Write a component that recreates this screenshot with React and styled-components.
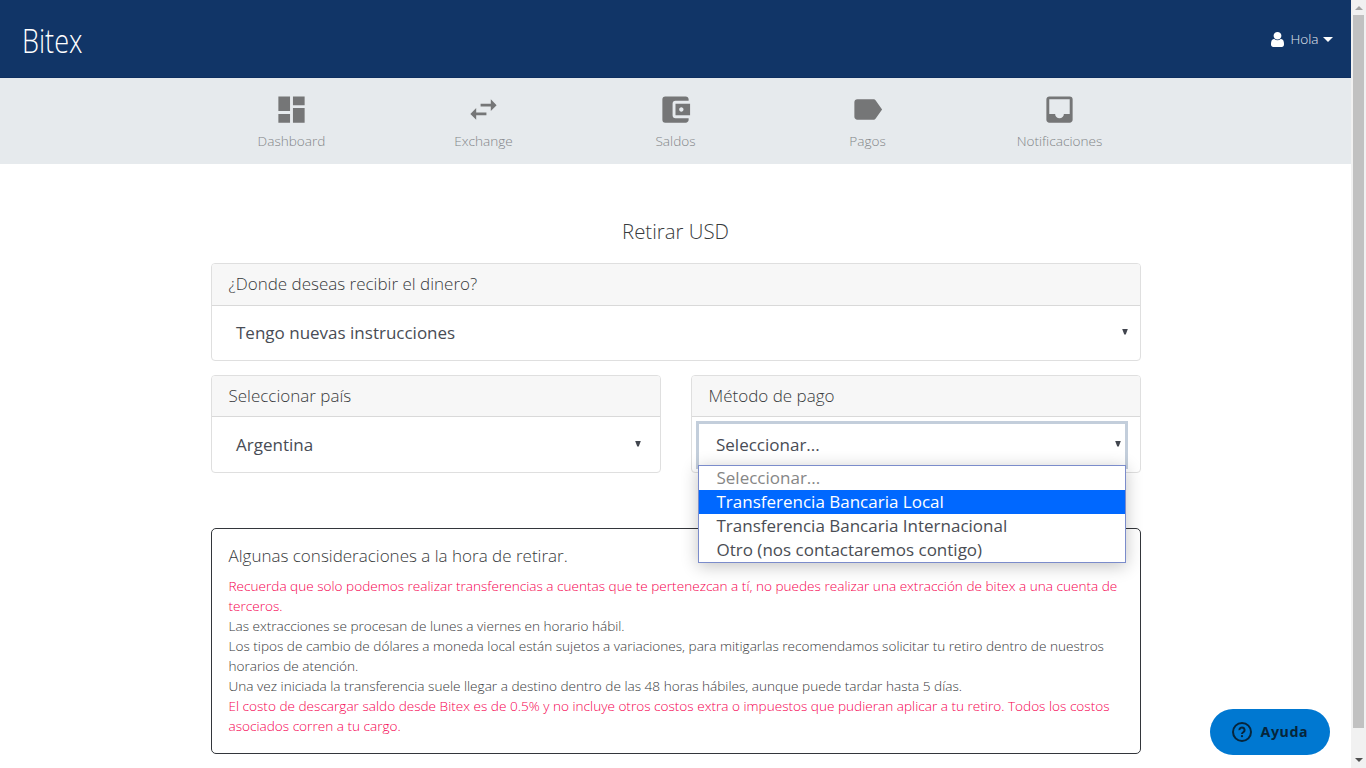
import React from 'react';
import styled, { createGlobalStyle } from 'styled-components';
import {
  MdDashboard,
  MdSwapHoriz,
  MdAccountBalanceWallet,
  MdLabel,
  MdInbox,
} from 'react-icons/md';

const GlobalStyle = createGlobalStyle`
  *, *::before, *::after { box-sizing: border-box; }
  html, body { margin: 0; padding: 0; }
  body {
    overflow: hidden;
    background: #fff;
    color: #373a3c;
    font-family: 'Open Sans', 'Noto Sans', sans-serif;
    font-weight: 300;
    font-size: 17px;
  }
`;

const Shell = styled.div`
  display: flex;
  width: 100%;
  height: 768px;
  overflow: hidden;
`;

const Page = styled.div`
  flex: 1;
  min-width: 0;
`;

const TopBar = styled.header`
  display: flex;
  align-items: center;
  justify-content: space-between;
  height: 78px;
  padding: 0 18px 0 22px;
  background: #113567;
  border-bottom: 1px solid #0e2f60;
`;

const Logo = styled.span`
  padding-top: 5px;
  color: #fff;
  font-size: 33px;
  line-height: 44px;
  transform: scaleX(0.82);
  transform-origin: left center;
`;

const UserMenu = styled.div`
  display: flex;
  align-items: center;
  color: #e4e9f0;
  font-size: 13.6px;
  line-height: 20px;
`;

const UserIcon = styled.svg`
  width: 13px;
  height: 15px;
  margin: 2px 6px 0 0;
  fill: #fff;
`;

const Caret = styled.span`
  margin: 2px 0 0 4.5px;
  border-top: 5px solid #fff;
  border-left: 5px solid transparent;
  border-right: 5px solid transparent;
`;

const NavBar = styled.nav`
  display: flex;
  justify-content: center;
  height: 86px;
  background: #e6eaed;
`;

const NavList = styled.div`
  display: grid;
  grid-template-columns: repeat(5, 192px);
`;

const NavItem = styled.a`
  display: flex;
  flex-direction: column;
  align-items: center;
  padding-top: 14px;
  color: #838689;
  font-size: 13.6px;
  line-height: 20px;

  svg {
    margin-bottom: 4px;
    color: #757677;
  }
`;

const Main = styled.main`
  width: 930px;
  margin: 0 auto;
  padding-top: 53px;
`;

const Title = styled.h1`
  margin: 0 0 17px;
  font-size: 20.4px;
  font-weight: 300;
  line-height: 29px;
  text-align: center;
`;

const Card = styled.section`
  height: 98px;
  border: 1px solid #dfdfdf;
  border-radius: 4px;
  background: #fff;
`;

const CardHeader = styled.div`
  height: ${(p) => p.$height || 41}px;
  padding: 0 17px;
  border-bottom: 1px solid #d9d9d9;
  border-radius: 3px 3px 0 0;
  background: #f7f7f7;
  font-size: 17px;
  line-height: 39px;
`;

const Columns = styled.div`
  display: grid;
  grid-template-columns: 1fr 1fr;
  gap: 30px;
  margin-top: 14px;
`;

const SelectBox = styled.div`
  display: flex;
  align-items: center;
  justify-content: space-between;
  position: relative;
  height: ${(p) => (p.$open ? 48 : 46)}px;
  margin: ${(p) => p.$top || 5}px ${(p) => (p.$open ? 11.5 : 4)}px 0 4px;
  padding: 0 ${(p) => p.$end || 7}px 0 20.5px;
  border: ${(p) => (p.$open ? '3px solid #c3cedb' : '0 solid transparent')};
  ${(p) => p.$open && 'padding-left: 17.5px; padding-right: 4px;'}
  color: #484c55;
  font-weight: 400;
  line-height: 24px;
`;

const Arrow = styled.span`
  width: 6px;
  height: 6px;
  margin-top: -3px;
  background: #42464f;
  clip-path: polygon(0 0, 100% 0, 62% 100%, 38% 100%);
`;

const Menu = styled.ul`
  position: absolute;
  z-index: 2;
  top: 41px;
  left: -1px;
  width: 428px;
  margin: 0;
  padding: 0;
  list-style: none;
  border: 1px solid #7b8ccb;
  background: #fff;
  box-shadow: 0 3px 16px rgba(0, 0, 0, 0.24);
`;

const Option = styled.li`
  height: 24px;
  padding-left: 18px;
  background: ${(p) => (p.$active ? '#0068ff' : '#fff')};
  color: ${(p) => (p.$active ? '#fff' : p.$muted ? '#868686' : '#4a4d54')};
  line-height: 24px;
  white-space: nowrap;
`;

const Notice = styled.section`
  height: 226px;
  margin-top: 55px;
  padding: 15px 16px 15px 17px;
  border: 1px solid #33363b;
  border-radius: 5px;
`;

const NoticeTitle = styled.h2`
  margin: 0 0 8px;
  font-size: 17px;
  font-weight: 300;
  line-height: 24px;
`;

const NoticeLine = styled.p`
  margin: 0;
  color: ${(p) => (p.$alert ? '#f5004f' : '#373a3c')};
  font-size: 13.6px;
  line-height: 20px;
`;

const HelpButton = styled.button`
  display: flex;
  align-items: center;
  position: fixed;
  top: 709px;
  left: 1210px;
  width: 120px;
  height: 46px;
  padding: 0 0 0 22px;
  border: 0;
  border-radius: 23px;
  background: #0078d1;
  color: #06253b;
  font: 700 14.2px/20px 'Noto Sans', sans-serif;
  letter-spacing: 0.6px;

  svg { margin-right: 8.5px; }
`;

const ScrollTrack = styled.div`
  display: flex;
  flex-direction: column;
  align-items: center;
  width: 15px;
  background: #f1f1f1;
`;

const ScrollThumb = styled.div`
  width: 11px;
  height: 713px;
  background: #c1c1c1;
`;

const ScrollButton = styled.div`
  display: flex;
  justify-content: center;
  height: ${(p) => (p.$down ? 40 : 15)}px;
  padding-top: ${(p) => (p.$down ? 30 : 6)}px;

  &::after {
    content: '';
    height: 4px;
    border: 4px solid transparent;
    ${(p) =>
      p.$down
        ? 'border-top-color: #505050; border-bottom: 0;'
        : 'border-bottom-color: #a3a3a3; border-top: 0;'}
  }
`;

const NAV = [
  ['Dashboard', MdDashboard],
  ['Exchange', MdSwapHoriz],
  ['Saldos', MdAccountBalanceWallet],
  ['Pagos', MdLabel],
  ['Notificaciones', MdInbox],
];

const NOTES = [
  [true, 'Recuerda que solo podemos realizar transferencias a cuentas que te pertenezcan a tí, no puedes realizar una extracción de bitex a una cuenta de terceros.'],
  [false, 'Las extracciones se procesan de lunes a viernes en horario hábil.'],
  [false, 'Los tipos de cambio de dólares a moneda local están sujetos a variaciones, para mitigarlas recomendamos solicitar tu retiro dentro de nuestros horarios de atención.'],
  [false, 'Una vez iniciada la transferencia suele llegar a destino dentro de las 48 horas hábiles, aunque puede tardar hasta 5 días.'],
  [true, 'El costo de descargar saldo desde Bitex es de 0.5% y no incluye otros costos extra o impuestos que pudieran aplicar a tu retiro. Todos los costos asociados corren a tu cargo.'],
];

export default function App() {
  return (
    <>
      <GlobalStyle />
      <Shell>
        <Page>
          <TopBar>
            <Logo>Bitex</Logo>
            <UserMenu>
              <UserIcon viewBox="0 128 1280 1536" preserveAspectRatio="none">
                <path d="M1280 1399q0 109-62.5 187t-150.5 78h-854q-88 0-150.5-78t-62.5-187q0-85 8.500-160.500t31.500-152 58.500-131 94-89 134.500-34.500q131 128 313 128t313-128q76 0 134.500 34.500t94 89 58.500 131 31.500 152 8.500 160.500zm-256-887q0 159-112.500 271.500t-271.500 112.500-271.500-112.500-112.500-271.500 112.500-271.500 271.500-112.500 271.500 112.500 112.500 271.500z" />
              </UserIcon>
              Hola
              <Caret />
            </UserMenu>
          </TopBar>
          <NavBar>
            <NavList>
              {NAV.map(([label, Icon]) => (
                <NavItem key={label}>
                  <Icon size={35} />
                  {label}
                </NavItem>
              ))}
            </NavList>
          </NavBar>
          <Main>
            <Title>Retirar USD</Title>
            <Card>
              <CardHeader $height={42}>¿Donde deseas recibir el dinero?</CardHeader>
              <SelectBox $top={4} $end={7.5}>
                Tengo nuevas instrucciones
                <Arrow />
              </SelectBox>
            </Card>
            <Columns>
              <Card>
                <CardHeader>Seleccionar país</CardHeader>
                <SelectBox $end={14.5}>
                  Argentina
                  <Arrow />
                </SelectBox>
              </Card>
              <Card>
                <CardHeader>Método de pago</CardHeader>
                <SelectBox $open $top={4}>
                  Seleccionar...
                  <Arrow />
                  <Menu>
                    <Option $muted>Seleccionar...</Option>
                    <Option $active>Transferencia Bancaria Local</Option>
                    <Option>Transferencia Bancaria Internacional</Option>
                    <Option>Otro (nos contactaremos contigo)</Option>
                  </Menu>
                </SelectBox>
              </Card>
            </Columns>
            <Notice>
              <NoticeTitle>Algunas consideraciones a la hora de retirar.</NoticeTitle>
              {NOTES.map(([alert, text]) => (
                <NoticeLine key={text} $alert={alert}>{text}</NoticeLine>
              ))}
            </Notice>
          </Main>
        </Page>
        <ScrollTrack>
          <ScrollButton />
          <ScrollThumb />
          <ScrollButton $down />
        </ScrollTrack>
      </Shell>
      <HelpButton>
        <svg width="20" height="20" viewBox="0 0 20 20" fill="none" stroke="currentColor" strokeWidth="2">
          <circle cx="10" cy="10" r="9" />
          <path d="M7.4 8.1a2.6 2.5 0 1 1 4.2 1.9c-.9.7-1.6 1-1.6 2.1" />
          <circle cx="10" cy="14.2" r="1.15" fill="currentColor" stroke="none" />
        </svg>
        Ayuda
      </HelpButton>
    </>
  );
}
